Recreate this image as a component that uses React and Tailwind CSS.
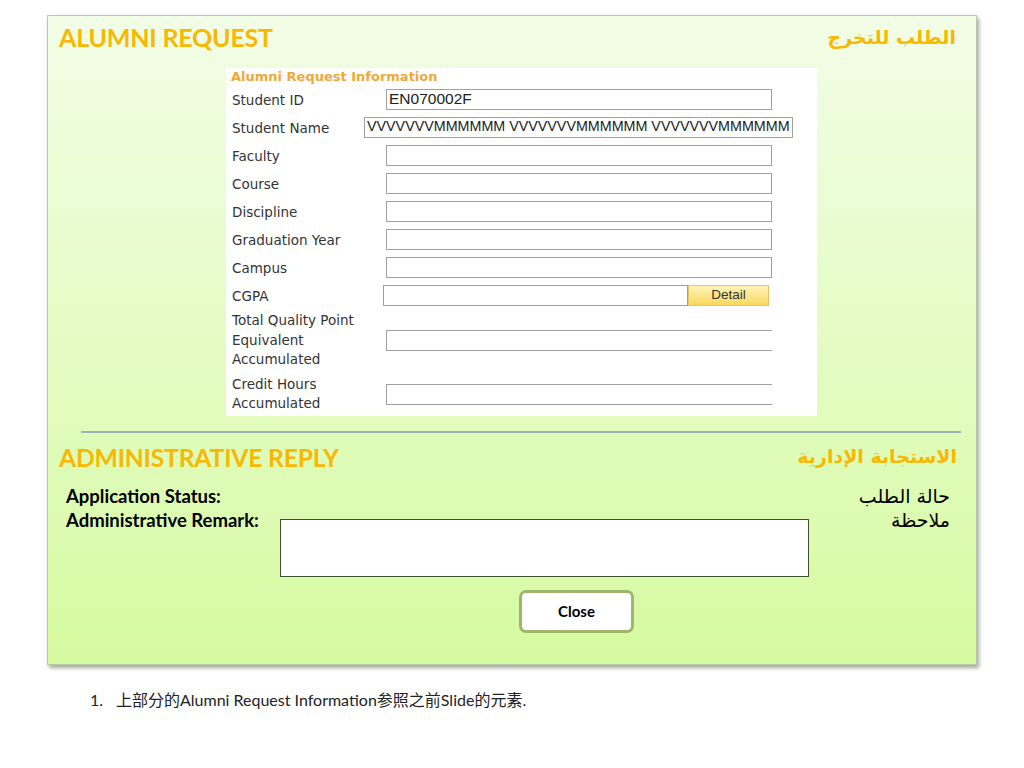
import React from "react";

const labelFont = { fontFamily: '"DejaVu Sans", Verdana, sans-serif' };

function Field({ label, children }) {
  return (
    <div className="flex items-center h-[28px]">
      <div className="w-[154px] pl-[6px] pt-[2px] text-[13.5px] text-[#333]">{label}</div>
      {children}
    </div>
  );
}

function Box({ className = "", value = "" }) {
  return (
    <div
      className={`h-[21px] bg-white border border-[#a0a0a0] flex items-center pl-[2px] text-[14.3px] text-[#222] whitespace-nowrap overflow-hidden font-['Liberation_Sans',Arial,sans-serif] ${className}`}
    >
      {value}
    </div>
  );
}

export default function App() {
  return (
    <div className="w-[1024px] h-[768px] bg-white relative">
      <div className="pt-[15px] pl-[47px]">
        {/* main panel */}
        <div className="w-[930px] h-[650px] border border-[#b9c9a3] bg-gradient-to-b from-[#f2fde6] to-[#d6faa0] shadow-[2px_3px_4px_rgba(0,0,0,0.35)] flex flex-col font-['Lato',sans-serif]">
          <div className="flex justify-between items-start px-[11px] pt-[5px] h-[52px]">
            <div className="text-[25px] font-bold text-[#f8b800] leading-[32px] tracking-[-0.2px]">
              ALUMNI REQUEST
            </div>
            <div
              dir="rtl"
              className="text-[19px] font-bold text-[#f8b800] leading-[32px] mr-[9px] font-['DejaVu_Sans',sans-serif]"
            >
              الطلب للتخرج
            </div>
          </div>

          {/* request info box */}
          <div
            className="ml-[178px] w-[591px] h-[348px] bg-white flex flex-col"
            style={labelFont}
          >
            <div className="h-[17px] pl-[5px] text-[13px] font-bold text-[#f0a838] leading-[17px]">
              Alumni Request Information
            </div>
            <Field label="Student ID">
              <Box className="w-[386px] ml-[6px] text-[15.5px]" value="EN070002F" />
            </Field>
            <Field label="Student Name">
              <Box
                className="w-[429px] ml-[-16px] border-[#888]"
                value="VVVVVVVMMMMMM VVVVVVVMMMMMM VVVVVVVMMMMMM"
              />
            </Field>
            <Field label="Faculty">
              <Box className="w-[386px] ml-[6px]" />
            </Field>
            <Field label="Course">
              <Box className="w-[386px] ml-[6px]" />
            </Field>
            <Field label="Discipline">
              <Box className="w-[386px] ml-[6px]" />
            </Field>
            <Field label="Graduation Year">
              <Box className="w-[386px] ml-[6px]" />
            </Field>
            <Field label="Campus">
              <Box className="w-[386px] ml-[6px]" />
            </Field>
            <Field label="CGPA">
              <div className="flex ml-[3px]">
                <Box className="w-[305px]" />
                <div className="w-[81px] h-[21px] border border-[#e6c560] bg-gradient-to-b from-[#fff3b8] to-[#f8d85a] text-[13.5px] text-[#333] flex items-center justify-center font-['Liberation_Sans',Arial,sans-serif]">
                  Detail
                </div>
              </div>
            </Field>
            <div className="flex items-center mt-[2px]">
              <div className="w-[154px] pl-[6px] text-[13.5px] leading-[19.5px] text-[#333]">
                Total Quality Point
                <br />
                Equivalent
                <br />
                Accumulated
              </div>
              <div className="w-[386px] ml-[6px] h-[21px] border-t border-b border-l border-[#a0a0a0]" />
            </div>
            <div className="flex items-center mt-[5px]">
              <div className="w-[154px] pl-[6px] text-[13.5px] leading-[19.5px] text-[#333]">
                Credit Hours
                <br />
                Accumulated
              </div>
              <div className="w-[386px] ml-[6px] h-[21px] border-t border-b border-l border-[#a0a0a0]" />
            </div>
          </div>

          {/* separator */}
          <div className="mt-[15px] ml-[33px] w-[880px] h-[2px] bg-[#97b4b2]" />

          <div className="flex justify-between items-start px-[11px] pt-[9px] h-[42px]">
            <div className="text-[24.7px] font-bold text-[#f8b800] leading-[32px] tracking-[-0.2px]">
              ADMINISTRATIVE REPLY
            </div>
            <div
              dir="rtl"
              className="text-[19px] font-bold text-[#f8b800] leading-[28px] mr-[8px] font-['DejaVu_Sans',sans-serif]"
            >
              الاستجابة الإدارية
            </div>
          </div>

          <div className="flex justify-between px-[18px] pt-[9px]">
            <div className="flex flex-col">
              <div className="text-[18.5px] font-bold text-black leading-[24px]">
                Application Status:
              </div>
              <div className="flex items-start">
                <div className="w-[214px] text-[18.5px] font-bold text-black leading-[24px]">
                  Administrative Remark:
                </div>
                <div className="mt-[11px] w-[529px] h-[58px] bg-white border-[1.5px] border-[#3f5030]" />
              </div>
            </div>
            <div
              dir="rtl"
              className="text-[19px] text-black leading-[24px] mr-[8px] font-['DejaVu_Sans',sans-serif]"
            >
              حالة الطلب
              <br />
              ملاحظة
            </div>
          </div>

          <div className="flex mt-[13px] ml-[471px]">
            <div className="w-[115px] h-[43px] bg-white border-[3px] border-[#9db66c] rounded-[7px] flex items-center justify-center text-[15px] font-bold text-black">
              Close
            </div>
          </div>
        </div>

        <div className="mt-[23px] ml-[43px] flex text-[16px] text-[#222] font-['Lato','Noto_Sans_CJK_SC',sans-serif]">
          <span className="w-[26px]">1.</span>
          <span>
            上部分的Alumni Request Information参照之前Slide的元素.
          </span>
        </div>
      </div>
    </div>
  );
}
